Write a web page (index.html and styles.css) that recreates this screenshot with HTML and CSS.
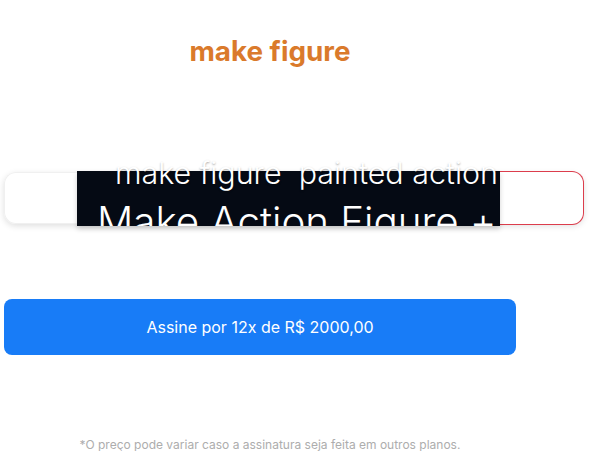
FILE: index.html
```html
<!DOCTYPE html>
<html lang="pt-BR">
<head>
<meta charset="utf-8">
<title>make figure</title>
<link rel="stylesheet" href="styles.css">
</head>
<body>
<main class="page">
  <h1 class="title">make figure</h1>
  <div class="card">
    <div class="card-lead"></div>
    <div class="preview">
      <div class="preview-line1">make figure&nbsp; painted action</div>
      <div class="preview-line2"><span>Make Action Figure +</span></div>
    </div>
    <div class="card-tail"></div>
  </div>
  <button class="cta" type="button">Assine por 12x de R$ 2000,00</button>
  <p class="note">*O preço pode variar caso a assinatura seja feita em outros planos.</p>
</main>
</body>
</html>
```
FILE: styles.css
```css
html, body {
  margin: 0;
  padding: 0;
  background: #ffffff;
}
body {
  font-family: Inter, "Noto Sans", "Liberation Sans", sans-serif;
}
.page {
  display: flex;
  flex-direction: column;
  align-items: flex-start;
  padding: 37px 4px 0 4px;
}
.title {
  margin: 0;
  width: 532px;
  text-align: center;
  font-size: 27.8px;
  line-height: 28px;
  font-weight: 700;
  color: #da7a2b;
}
.card {
  margin-top: 107px;
  width: 580px;
  height: 52px;
  display: flex;
  align-items: center;
  border-radius: 12px;
  background: #fff;
  box-shadow: 0 2px 6px rgba(0, 0, 0, 0.13);
}
.card-lead {
  width: 73px;
  height: 52px;
  box-sizing: border-box;
  border: 1px solid #f0f0f0;
  border-right: 0;
  border-radius: 12px 0 0 12px;
}
.preview {
  width: 423px;
  height: 55px;
  flex: none;
  background: #050a14;
  color: #fff;
  font-weight: 300;
  white-space: nowrap;
  box-shadow: 0 3px 5px rgba(0, 0, 0, 0.18);
  position: relative;
  z-index: 1;
}
.preview-line1 {
  margin-top: -13px;
  padding-left: 38px;
  font-size: 30.4px;
  line-height: 30px;
  text-shadow: 0 1px 2px rgba(0, 0, 0, 0.35);
}
.preview-line2 {
  margin-top: 14px;
  padding-left: 20px;
  font-size: 40.3px;
  line-height: 40px;
  height: 24px;
  overflow: hidden;
}
.card-tail {
  flex: 1;
  height: 54px;
  box-sizing: border-box;
  border: 1px solid #dc3d4c;
  border-left: 0;
  border-radius: 0 12px 12px 0;
}
.cta {
  margin-top: 75px;
  width: 512px;
  height: 56px;
  border: 0;
  border-radius: 8px;
  background: #187cf7;
  color: #fff;
  font-family: Inter, "Noto Sans", "Liberation Sans", sans-serif;
  font-size: 16px;
  font-weight: 400;
  cursor: pointer;
}
.note {
  margin: 84px 0 0 0;
  width: 532px;
  text-align: center;
  font-size: 12px;
  line-height: 12px;
  color: #adadad;
}
```
